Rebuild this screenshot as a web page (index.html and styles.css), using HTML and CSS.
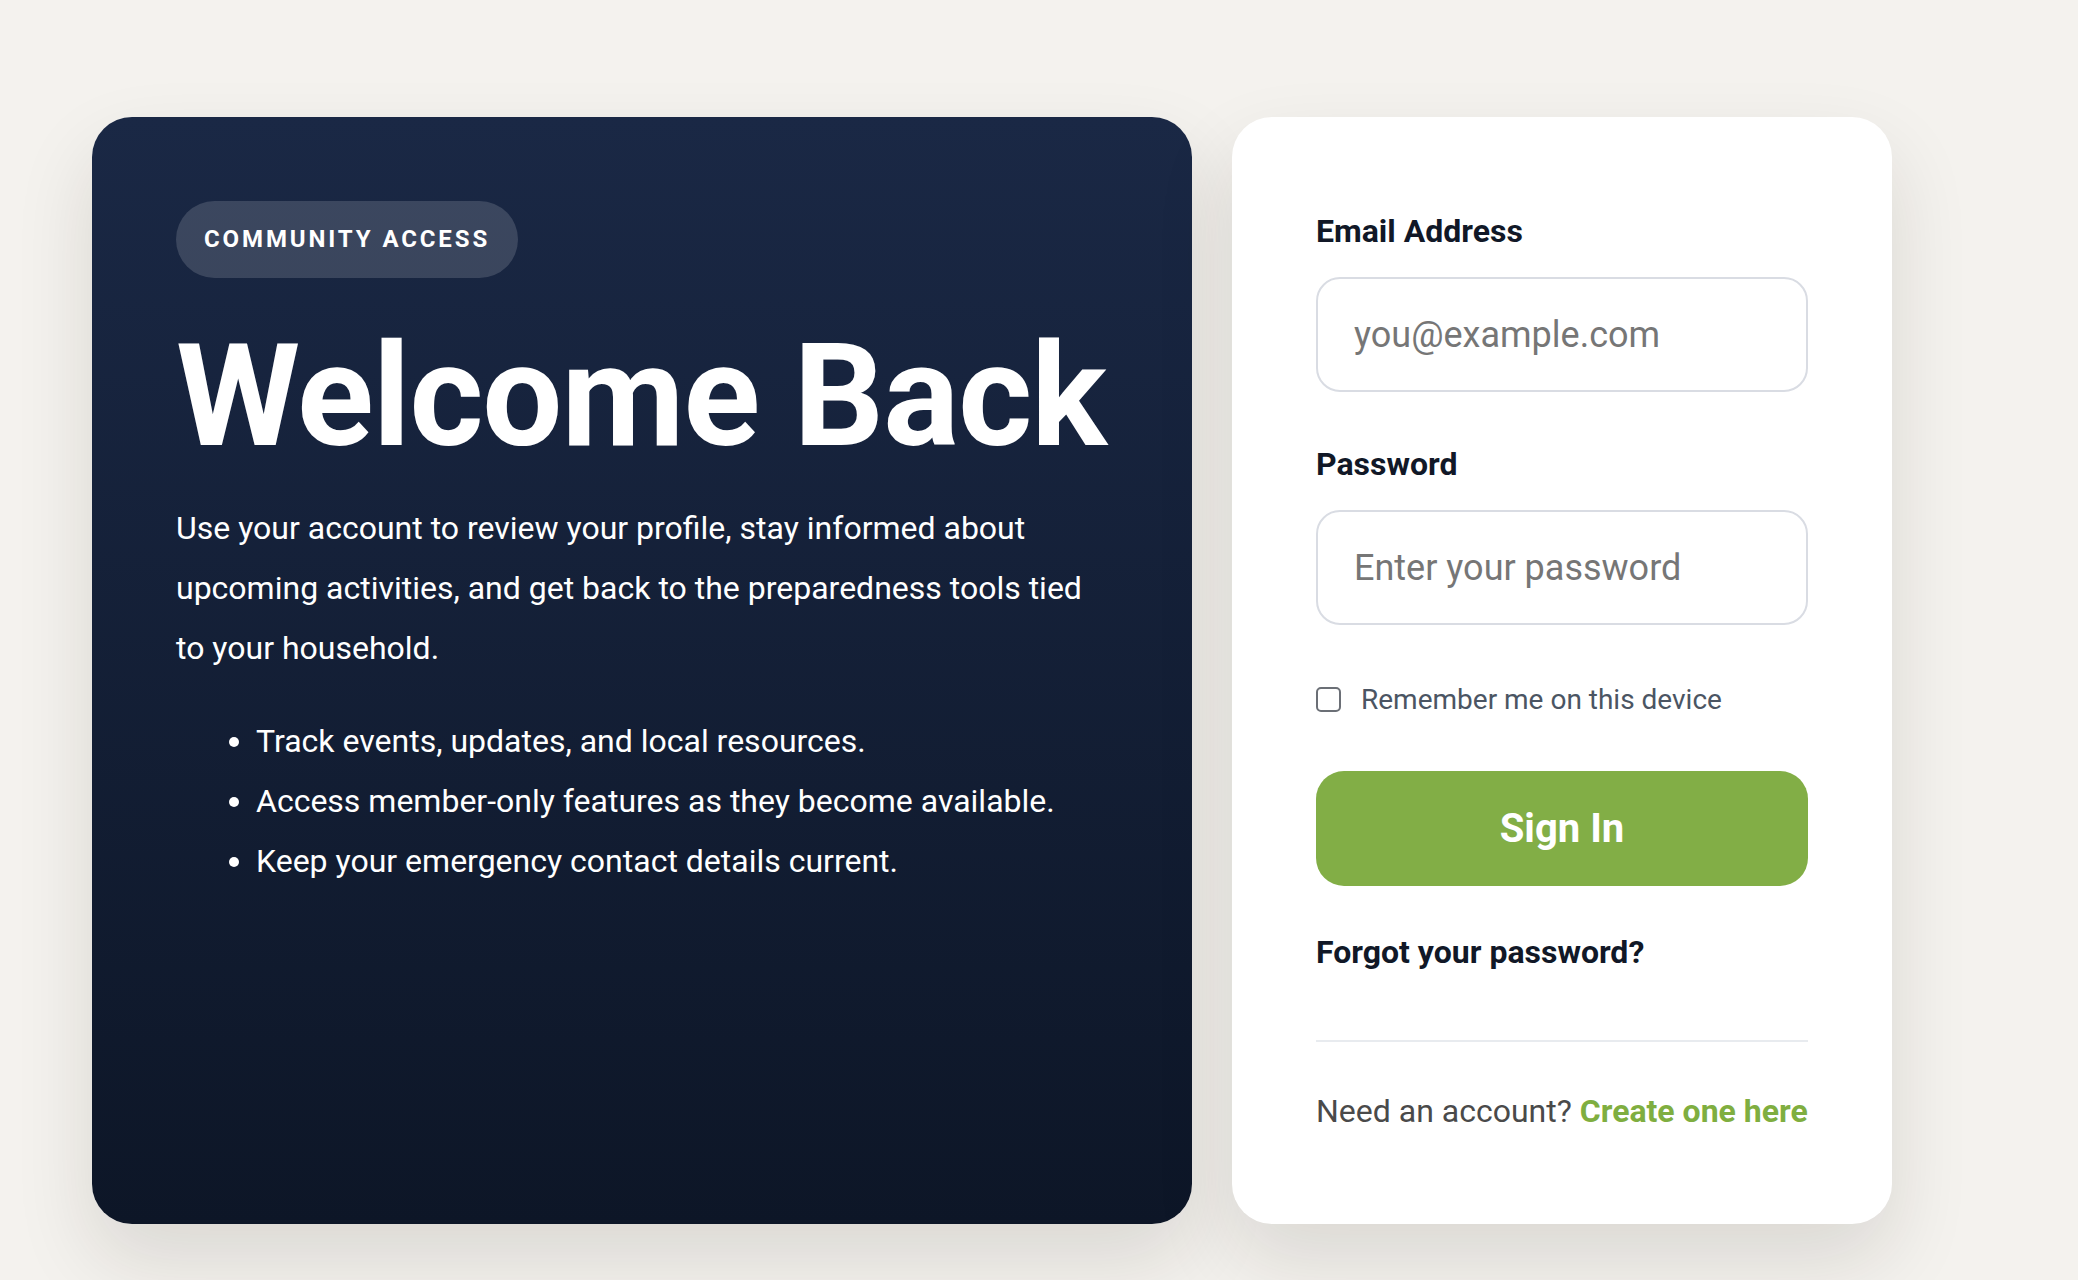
FILE: index.html
```html
<!DOCTYPE html>
<html lang="en">

<head>
    <meta charset="UTF-8">
    <meta name="viewport" content="width=device-width, initial-scale=1.0">
    <title>Sign In</title>
    <link rel="stylesheet" href="styles.css">
</head>

<body>
    <div class="page">
        <div class="login-grid">
            <div class="intro-card">
                <span class="intro-badge">Community Access</span>
                <h1 class="intro-title">Welcome Back</h1>
                <p class="intro-text">
                    Use your account to review your profile, stay informed about upcoming activities, and get back to the preparedness tools tied to your household.
                </p>
                <ul class="intro-list">
                    <li>Track events, updates, and local resources.</li>
                    <li>Access member-only features as they become available.</li>
                    <li>Keep your emergency contact details current.</li>
                </ul>
            </div>

            <form class="form-card" onsubmit="return false">
                <label class="field-label" for="email">Email Address</label>
                <input class="field-input" id="email" type="email" placeholder="you@example.com">

                <label class="field-label" for="password">Password</label>
                <input class="field-input" id="password" type="password" placeholder="Enter your password">

                <label class="remember">
                    <input type="checkbox" class="remember-box">
                    <span>Remember me on this device</span>
                </label>

                <button class="sign-in-button" type="submit">Sign In</button>

                <a class="forgot-link" href="#">Forgot your password?</a>

                <div class="form-footer">
                    Need an account? <a href="#">Create one here</a>
                </div>
            </form>
        </div>
    </div>
</body>

</html>
```

FILE: styles.css
```css
body {
    margin: 0;
    min-height: 1280px;
    background-color: #f4f2ee;
    font-family: Roboto, "Noto Sans", sans-serif;
}

.page {
    padding: 117px 0 0 92px;
}

.login-grid {
    width: 1800px;
    display: grid;
    grid-template-columns: 1100px 660px;
    gap: 40px;
}

.intro-card {
    background: linear-gradient(180deg, #1a2845 0%, #0d1627 100%);
    border-radius: 40px;
    padding: 84px;
    color: white;
    box-shadow: 0 36px 80px rgba(30, 28, 20, 0.12);
}

.intro-badge {
    display: inline-block;
    padding: 24px 28px;
    border-radius: 999px;
    background-color: rgba(255, 255, 255, 0.15);
    font-size: 24px;
    line-height: 29px;
    font-weight: 700;
    letter-spacing: 0.12em;
    text-transform: uppercase;
}

.intro-title {
    margin: 48px 0 0;
    font-size: 142px;
    line-height: 1;
    font-weight: 700;
    letter-spacing: -0.007em;
}

.intro-text {
    margin: 30px 0 0;
    font-size: 32px;
    line-height: 60px;
}

.intro-list {
    margin: 33px 0 0;
    padding-left: 80px;
    font-size: 32px;
    line-height: 60px;
}

.form-card {
    background-color: white;
    border-radius: 40px;
    padding: 95px 84px 94px;
    display: flex;
    flex-direction: column;
    box-shadow: 0 36px 80px rgba(30, 28, 20, 0.12);
}

.field-label {
    font-size: 32px;
    font-weight: 700;
    color: #111827;
    margin-bottom: 27px;
}

.field-input {
    height: 115px;
    box-sizing: border-box;
    border: 2px solid #d9dce3;
    border-radius: 24px;
    padding: 0 36px;
    font-family: inherit;
    font-size: 36px;
    color: #111827;
    margin-bottom: 53px;
    outline: none;
}

.field-input::placeholder {
    color: #767676;
}

.remember {
    display: flex;
    align-items: center;
    gap: 20px;
    margin-top: 5px;
    font-size: 28px;
    color: #4b5563;
}

.remember-box {
    appearance: none;
    width: 25px;
    height: 25px;
    margin: 0;
    border: 2px solid #6b6f76;
    border-radius: 5px;
}

.sign-in-button {
    margin-top: 55px;
    height: 115px;
    border: none;
    border-radius: 28px;
    background-color: #82ae46;
    color: white;
    font-family: inherit;
    font-size: 40px;
    font-weight: 700;
}

.forgot-link {
    margin-top: 47px;
    font-size: 32px;
    font-weight: 700;
    color: #111827;
    text-decoration: none;
}

.form-footer {
    margin-top: 69px;
    padding-top: 50px;
    border-top: 2px solid #e8ebef;
    font-size: 32px;
    color: #4a4a4a;
}

.form-footer a {
    color: #7fae40;
    font-weight: 700;
    text-decoration: none;
}
```
